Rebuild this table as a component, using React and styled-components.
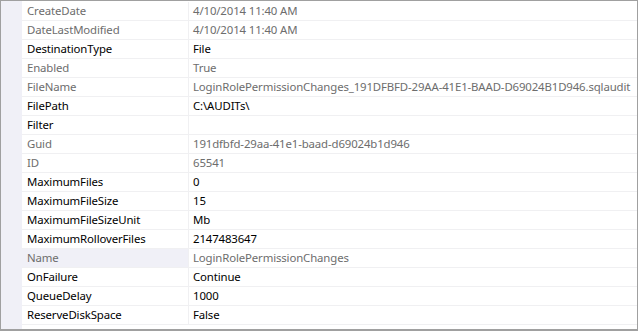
import React from "react";
import styled, { createGlobalStyle } from "styled-components";

const props = [
  { name: "CreateDate", value: "4/10/2014 11:40 AM", ro: true },
  { name: "DateLastModified", value: "4/10/2014 11:40 AM", ro: true },
  { name: "DestinationType", value: "File" },
  { name: "Enabled", value: "True", ro: true },
  {
    name: "FileName",
    value: "LoginRolePermissionChanges_191DFBFD-29AA-41E1-BAAD-D69024B1D946.sqlaudit",
    ro: true,
  },
  { name: "FilePath", value: "C:\\AUDITs\\" },
  { name: "Filter", value: "" },
  { name: "Guid", value: "191dfbfd-29aa-41e1-baad-d69024b1d946", ro: true },
  { name: "ID", value: "65541", ro: true },
  { name: "MaximumFiles", value: "0" },
  { name: "MaximumFileSize", value: "15" },
  { name: "MaximumFileSizeUnit", value: "Mb" },
  { name: "MaximumRolloverFiles", value: "2147483647" },
  { name: "Name", value: "LoginRolePermissionChanges", ro: true, selected: true },
  { name: "OnFailure", value: "Continue" },
  { name: "QueueDelay", value: "1000" },
  { name: "ReserveDiskSpace", value: "False" },
];

const App = () => {
  return (
    <>
      <Global />
      <Grid>
        <Margin />
        <Rows>
          {props.map((p) => (
            <Row key={p.name}>
              <NameCell $ro={p.ro} $selected={p.selected}>
                {p.name}
              </NameCell>
              <ValueCell $ro={p.ro}>{p.value}</ValueCell>
            </Row>
          ))}
        </Rows>
      </Grid>
    </>
  );
};

export default App;

const Global = createGlobalStyle`
  body {
    margin: 0;
    background: #fff;
    font-family: "Noto Sans", sans-serif;
  }
`;

const Grid = styled.div`
  width: 638px;
  height: 331px;
  box-sizing: border-box;
  border: 1px solid #a0a0a0;
  border-bottom-width: 2px;
  display: flex;
  background: #fff;
  overflow: hidden;
`;

const Margin = styled.div`
  width: 21px;
  flex-shrink: 0;
  background: #f0f0f7;
`;

const Rows = styled.div`
  flex: 1;
  display: flex;
  flex-direction: column;
  padding-top: 1px;
`;

const Row = styled.div`
  display: grid;
  grid-template-columns: 167px 1fr;
  height: 19px;
  box-sizing: border-box;
  border-bottom: 1px solid #f0f0f2;
  font-size: 11.4px;
  letter-spacing: -0.13px;
  line-height: 18px;
`;

const NameCell = styled.div`
  padding-left: 5px;
  border-right: 1px solid #f0f0f2;
  color: ${(p) => (p.$ro ? "#6d6d6d" : "#000")};
  background: ${(p) => (p.$selected ? "#f0f0f7" : "transparent")};
  white-space: nowrap;
  overflow: hidden;
`;

const ValueCell = styled.div`
  padding-left: 4px;
  color: ${(p) => (p.$ro ? "#6d6d6d" : "#000")};
  white-space: nowrap;
  overflow: hidden;
`;
